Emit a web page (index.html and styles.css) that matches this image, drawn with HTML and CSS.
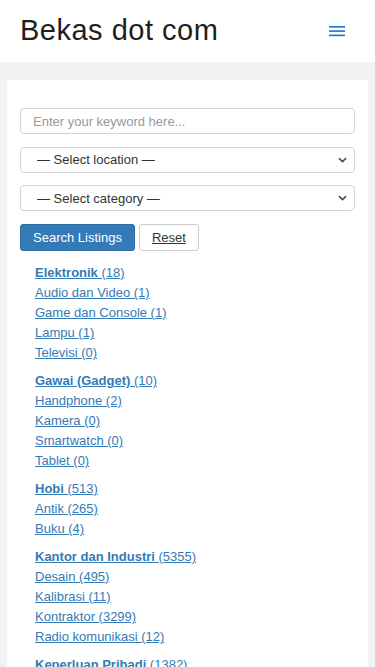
FILE: index.html
```html
<!DOCTYPE html>
<html lang="id">
<head>
    <meta charset="UTF-8">
    <meta name="viewport" content="width=device-width, initial-scale=1.0">
    <title>Bekas dot com</title>
    <link rel="stylesheet" href="styles.css">
</head>
<body>
    <header class="site-header">
        <h1 class="site-title">Bekas dot com</h1>
        <button class="menu-toggle" type="button" aria-label="Menu">
            <svg width="16" height="11" viewBox="0 0 16 11">
                <rect x="0" y="0" width="16" height="1.6" fill="#1f74c4"/>
                <rect x="0" y="4.3" width="16" height="1.6" fill="#1f74c4"/>
                <rect x="0" y="8.6" width="16" height="1.6" fill="#1f74c4"/>
            </svg>
        </button>
    </header>

    <main class="content">
        <div class="card">
            <!-- Search form -->
            <form class="search-form" method="get" action="#">
                <input type="text" class="field" name="keyword" placeholder="Enter your keyword here...">

                <div class="select-wrap">
                    <select class="field" name="location">
                        <option>&mdash; Select location &mdash;</option>
                    </select>
                    <svg class="chevron" width="9" height="6" viewBox="0 0 9 6"><path d="M1 1.2 L4.5 4.6 L8 1.2" fill="none" stroke="#444" stroke-width="1.6"/></svg>
                </div>

                <div class="select-wrap">
                    <select class="field" name="category">
                        <option>&mdash; Select category &mdash;</option>
                    </select>
                    <svg class="chevron" width="9" height="6" viewBox="0 0 9 6"><path d="M1 1.2 L4.5 4.6 L8 1.2" fill="none" stroke="#444" stroke-width="1.6"/></svg>
                </div>

                <div class="actions">
                    <button type="submit" class="btn btn-primary">Search Listings</button>
                    <button type="reset" class="btn btn-default">Reset</button>
                </div>
            </form>

            <!-- Category list -->
            <ul class="categories">
                <li class="group">
                    <a href="#"><strong>Elektronik</strong> (18)</a>
                    <a href="#">Audio dan Video (1)</a>
                    <a href="#">Game dan Console (1)</a>
                    <a href="#">Lampu (1)</a>
                    <a href="#">Televisi (0)</a>
                </li>
                <li class="group">
                    <a href="#"><strong>Gawai (Gadget)</strong> (10)</a>
                    <a href="#">Handphone (2)</a>
                    <a href="#">Kamera (0)</a>
                    <a href="#">Smartwatch (0)</a>
                    <a href="#">Tablet (0)</a>
                </li>
                <li class="group">
                    <a href="#"><strong>Hobi</strong> (513)</a>
                    <a href="#">Antik (265)</a>
                    <a href="#">Buku (4)</a>
                </li>
                <li class="group">
                    <a href="#"><strong>Kantor dan Industri</strong> (5355)</a>
                    <a href="#">Desain (495)</a>
                    <a href="#">Kalibrasi (11)</a>
                    <a href="#">Kontraktor (3299)</a>
                    <a href="#">Radio komunikasi (12)</a>
                </li>
                <li class="group">
                    <a href="#"><strong>Keperluan Pribadi</strong> (1382)</a>
                </li>
            </ul>
        </div>
    </main>
</body>
</html>
```

FILE: styles.css
```css
/* General */
body {
    margin: 0;
    font-family: 'Liberation Sans', Arial, sans-serif;
    background-color: #f2f2f2;
    color: #333;
}

/* Header */
.site-header {
    display: flex;
    align-items: center;
    justify-content: space-between;
    height: 62px;
    padding: 0 30px 0 20px;
    background-color: #fff;
}

.site-title {
    margin: 0;
    font-size: 29px;
    font-weight: normal;
    letter-spacing: 0.5px;
    color: #1e1e1e;
    padding-bottom: 2px;
}

.menu-toggle {
    border: none;
    background: none;
    padding: 0;
    display: flex;
}

/* Card */
.content {
    padding: 18px 7px 0;
}

.card {
    background-color: #fff;
    padding: 28px 13px 20px;
}

/* Form */
.search-form {
    display: flex;
    flex-direction: column;
    gap: 12.5px;
}

.field {
    width: 100%;
    box-sizing: border-box;
    height: 26px;
    margin: 0;
    padding: 0 12px;
    font-family: inherit;
    font-size: 13px;
    color: #333;
    background-color: #fff;
    border: 1px solid #d4d4d4;
    border-radius: 4px;
}

.field::placeholder {
    color: #999;
}

.select-wrap {
    position: relative;
}

select.field {
    appearance: none;
    -webkit-appearance: none;
    padding-left: 16px;
}

.chevron {
    position: absolute;
    right: 8px;
    top: 10px;
    pointer-events: none;
}

.actions {
    display: flex;
    gap: 4px;
}

.btn {
    height: 27px;
    padding: 0 12px;
    font-family: inherit;
    font-size: 13px;
    border-radius: 3px;
    cursor: pointer;
}

.btn-primary {
    background-color: #337ab7;
    border: 1px solid #2e6da4;
    color: #fff;
}

.btn-default {
    background-color: #fff;
    border: 1px solid #ccc;
    color: #333;
    text-decoration: underline;
}

/* Categories */
.categories {
    list-style: none;
    margin: 12.5px 0 0;
    padding: 0 0 0 15px;
}

.group {
    margin-bottom: 8px;
}

.group a {
    display: block;
    width: max-content;
    line-height: 20px;
    font-size: 13px;
    color: #337ab7;
    text-decoration: underline;
}
```
